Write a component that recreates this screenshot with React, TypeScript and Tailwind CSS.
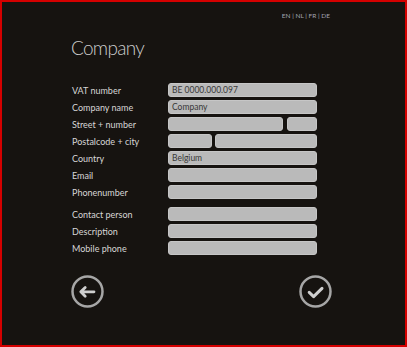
const FONT = "font-['Lato','Noto_Sans',sans-serif]";

function Field({ className = '' }: { className?: string }) {
  return <div className={`h-[14px] rounded-[3px] bg-[#bababa] border border-[#c6c6c6] ${className}`} />;
}

function TextField({ value }: { value: string }) {
  return (
    <div className="h-[14px] w-[149px] rounded-[3px] bg-[#bababa] border border-[#c6c6c6] flex items-center pl-[3px] text-[8.5px] leading-none text-[#383838]">
      {value}
    </div>
  );
}

function Row({ label, children, className = '' }: { label: string; children: React.ReactNode; className?: string }) {
  return (
    <div className={`flex items-center ${className}`}>
      <span className="w-[97px] pl-[1px] text-[9px] leading-none text-[#d6d6d6]">{label}</span>
      {children}
    </div>
  );
}

function BackIcon() {
  return (
    <svg width="33" height="33" viewBox="0 0 33 33" fill="none">
      <circle cx="16.5" cy="16.5" r="15" stroke="#a6a6a6" strokeWidth="2.5" />
      <path d="M9.8 16.8 H23 M14.2 12.4 L9.8 16.8 L14.2 21.2" stroke="#cfcfcf" strokeWidth="2.8" strokeLinecap="round" strokeLinejoin="round" />
    </svg>
  );
}

function CheckIcon() {
  return (
    <svg width="33" height="33" viewBox="0 0 33 33" fill="none">
      <circle cx="16.5" cy="16.5" r="15" stroke="#a6a6a6" strokeWidth="2.5" />
      <path d="M10.2 17.4 L14.6 21.6 L23 13.4" stroke="#cfcfcf" strokeWidth="3" strokeLinecap="round" strokeLinejoin="round" />
    </svg>
  );
}

export default function App() {
  return (
    <div className={`w-[407px] h-[347px] box-border border-2 border-[#d40000] bg-[#161310] ${FONT}`}>
      <div className="ml-[69px] w-[261px] pt-[9px]">
        <div className="flex justify-end pr-[2px] text-[6.5px] leading-[10px] text-[#a0a3b0]">EN | NL | FR | DE</div>

        <h1 className="mt-[15px] text-[19px] leading-[24px] font-light tracking-[-0.7px] text-[#cdcdcd]">Company</h1>

        {/* Form */}
        <div className="mt-[23px] flex flex-col gap-[3px]">
          <Row label="VAT number"><TextField value="BE 0000.000.097" /></Row>
          <Row label="Company name"><TextField value="Company" /></Row>
          <Row label="Street + number">
            <div className="flex gap-[4px]">
              <Field className="w-[115px]" />
              <Field className="w-[30px]" />
            </div>
          </Row>
          <Row label="Postalcode + city">
            <div className="flex gap-[3px]">
              <Field className="w-[44px]" />
              <Field className="w-[102px]" />
            </div>
          </Row>
          <Row label="Country"><TextField value="Belgium" /></Row>
          <Row label="Email"><Field className="w-[149px]" /></Row>
          <Row label="Phonenumber"><Field className="w-[149px]" /></Row>
          <Row label="Contact person" className="mt-[5px]"><Field className="w-[149px]" /></Row>
          <Row label="Description"><Field className="w-[149px]" /></Row>
          <Row label="Mobile phone"><Field className="w-[149px]" /></Row>
        </div>

        <div className="mt-[20px] flex justify-between">
          <button className="w-[33px] h-[33px]"><BackIcon /></button>
          <button className="w-[33px] h-[33px]"><CheckIcon /></button>
        </div>
      </div>
    </div>
  );
}
